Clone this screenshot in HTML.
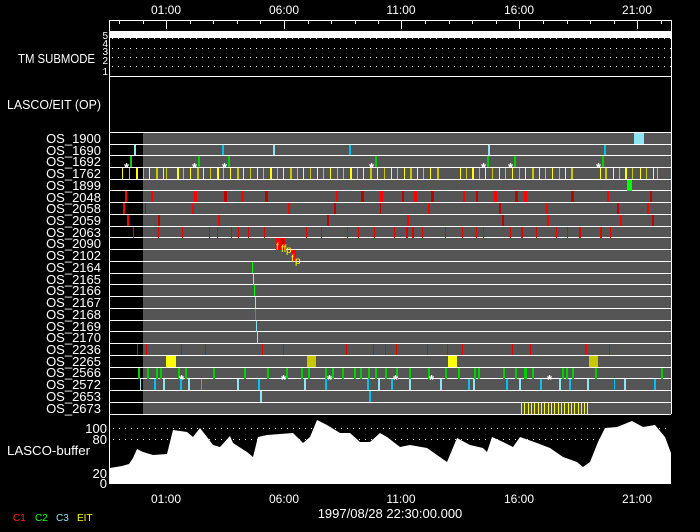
<!DOCTYPE html>
<html><head><meta charset="utf-8"><style>
html,body{margin:0;padding:0;background:#000;}
svg{display:block;}
text{font-family:"Liberation Sans",sans-serif;fill:#fff;}
</style></head><body>
<svg width="700" height="532" viewBox="0 0 700 532" xmlns="http://www.w3.org/2000/svg" shape-rendering="crispEdges">
<rect width="700" height="532" fill="#000"/>
<g stroke="#fff" stroke-width="1">
<line x1="109" y1="20.5" x2="671" y2="20.5"/>
<line x1="109.5" y1="20" x2="109.5" y2="484"/>
<line x1="671.5" y1="20" x2="671.5" y2="414"/>
<line x1="109" y1="76.5" x2="671" y2="76.5"/>
<line x1="109" y1="132.5" x2="671" y2="132.5"/>
</g>
<g stroke="#fff">
<path d="M119.5 20v4M143.5 20v4M190.5 20v4M213.5 20v4M237.5 20v4M260.5 20v4M308.5 20v4M331.5 20v4M355.5 20v4M378.5 20v4M425.5 20v4M449.5 20v4M472.5 20v4M496.5 20v4M543.5 20v4M567.5 20v4M590.5 20v4M614.5 20v4M661.5 20v4"/>
<path d="M166.5 20v9M284.5 20v9M401.5 20v9M519.5 20v9M637.5 20v9"/>
</g>
<g font-size="12" text-anchor="middle">
<text x="166" y="14">01:00</text><text x="284" y="14">06:00</text><text x="401" y="14">11:00</text><text x="519" y="14">16:00</text><text x="637" y="14">21:00</text>
</g>
<rect x="110" y="31" width="561" height="7" fill="#fff"/>
<g stroke="#fff" stroke-dasharray="1 5" stroke-width="1">
<line x1="112" y1="38.5" x2="671" y2="38.5"/><line x1="112" y1="48.5" x2="671" y2="48.5"/>
<line x1="112" y1="57.5" x2="671" y2="57.5"/><line x1="112" y1="66.5" x2="671" y2="66.5"/>
</g>
<g font-size="10" text-anchor="end">
<text x="108" y="39">5</text><text x="108" y="47">4</text><text x="108" y="55">3</text><text x="108" y="64">2</text><text x="108" y="75">1</text>
</g>
<text x="18" y="63" font-size="13" textLength="77" lengthAdjust="spacingAndGlyphs">TM SUBMODE</text>
<text x="7" y="109" font-size="13" textLength="94" lengthAdjust="spacingAndGlyphs">LASCO/EIT (OP)</text>
<rect x="143" y="133" width="528" height="281" fill="#555"/>
<g stroke="#fff"><path d="M109 144.5h562M109 155.5h562M109 167.5h562M109 179.5h562M109 190.5h562M109 202.5h562M109 214.5h562M109 226.5h562M109 237.5h562M109 249.5h562M109 261.5h562M109 273.5h562M109 284.5h562M109 296.5h562M109 308.5h562M109 320.5h562M109 331.5h562M109 343.5h562M109 355.5h562M109 367.5h562M109 378.5h562M109 390.5h562M109 402.5h562M109 414.5h562"/></g>
<g font-size="13" text-anchor="end">
<text x="101" y="143">OS_1900</text><text x="101" y="155">OS_1690</text><text x="101" y="166">OS_1692</text><text x="101" y="178">OS_1762</text>
<text x="101" y="190">OS_1899</text><text x="101" y="202">OS_2048</text><text x="101" y="213">OS_2058</text><text x="101" y="225">OS_2059</text>
<text x="101" y="237">OS_2063</text><text x="101" y="248">OS_2090</text><text x="101" y="260">OS_2102</text><text x="101" y="272">OS_2164</text>
<text x="101" y="284">OS_2165</text><text x="101" y="295">OS_2166</text><text x="101" y="307">OS_2167</text><text x="101" y="319">OS_2168</text>
<text x="101" y="331">OS_2169</text><text x="101" y="342">OS_2170</text><text x="101" y="354">OS_2236</text><text x="101" y="366">OS_2265</text>
<text x="101" y="377">OS_2566</text><text x="101" y="389">OS_2572</text><text x="101" y="401">OS_2653</text><text x="101" y="413">OS_2673</text>
</g>
<rect x="634" y="133" width="10" height="11" fill="#8ee4f0"/>
<g fill="#8ee4f0"><rect x="134" y="145" width="2" height="10"/><rect x="273" y="145" width="2" height="10"/><rect x="488" y="145" width="2" height="10"/></g>
<g fill="#00c0f0"><rect x="222" y="145" width="2" height="10"/><rect x="349" y="145" width="2" height="10"/><rect x="604" y="145" width="2" height="10"/></g>
<g fill="#00d000"><rect x="130" y="156" width="2" height="11"/><rect x="198" y="156" width="2" height="11"/><rect x="228" y="156" width="2" height="11"/><rect x="375" y="156" width="2" height="11"/><rect x="487" y="156" width="2" height="11"/><rect x="514" y="156" width="2" height="11"/><rect x="602" y="156" width="2" height="11"/></g>
<g font-size="13" font-weight="bold"><text x="124" y="172">*</text><text x="192" y="172">*</text><text x="222" y="172">*</text><text x="369" y="172">*</text><text x="481" y="172">*</text><text x="508" y="172">*</text><text x="596" y="172">*</text></g>
<g fill="#ffff00">
<rect x="122" y="168" width="1" height="11"/><rect x="136" y="168" width="2" height="11"/><rect x="149" y="168" width="1" height="11"/><rect x="163" y="168" width="1" height="11"/><rect x="177" y="168" width="2" height="11"/><rect x="190" y="168" width="1" height="11"/><rect x="203" y="168" width="1" height="11"/><rect x="217" y="168" width="2" height="11"/><rect x="230" y="168" width="1" height="11"/><rect x="243" y="168" width="1" height="11"/><rect x="257" y="168" width="1" height="11"/><rect x="270" y="168" width="2" height="11"/><rect x="283" y="168" width="1" height="11"/><rect x="303" y="168" width="1" height="11"/><rect x="317" y="168" width="1" height="11"/><rect x="330" y="168" width="1" height="11"/><rect x="350" y="168" width="2" height="11"/><rect x="363" y="168" width="1" height="11"/><rect x="377" y="168" width="1" height="11"/><rect x="391" y="168" width="1" height="11"/><rect x="404" y="168" width="1" height="11"/><rect x="417" y="168" width="1" height="11"/><rect x="430" y="168" width="1" height="11"/><rect x="460" y="168" width="1" height="11"/><rect x="472" y="168" width="2" height="11"/><rect x="485" y="168" width="1" height="11"/><rect x="499" y="168" width="1" height="11"/><rect x="512" y="168" width="1" height="11"/><rect x="525" y="168" width="1" height="11"/><rect x="539" y="168" width="1" height="11"/><rect x="552" y="168" width="1" height="11"/><rect x="565" y="168" width="1" height="11"/><rect x="600" y="168" width="1" height="11"/><rect x="613" y="168" width="1" height="11"/><rect x="625" y="168" width="2" height="11"/><rect x="640" y="168" width="1" height="11"/><rect x="653" y="168" width="1" height="11"/>
</g>
<g fill="#c8c800">
<rect x="129" y="168" width="1" height="11"/><rect x="143" y="168" width="1" height="11"/><rect x="156" y="168" width="2" height="11"/><rect x="166" y="168" width="1" height="11"/><rect x="183" y="168" width="1" height="11"/><rect x="197" y="168" width="2" height="11"/><rect x="210" y="168" width="1" height="11"/><rect x="223" y="168" width="1" height="11"/><rect x="237" y="168" width="2" height="11"/><rect x="250" y="168" width="1" height="11"/><rect x="263" y="168" width="1" height="11"/><rect x="277" y="168" width="1" height="11"/><rect x="290" y="168" width="2" height="11"/><rect x="297" y="168" width="1" height="11"/><rect x="310" y="168" width="1" height="11"/><rect x="323" y="168" width="1" height="11"/><rect x="337" y="168" width="1" height="11"/><rect x="343" y="168" width="1" height="11"/><rect x="357" y="168" width="1" height="11"/><rect x="370" y="168" width="2" height="11"/><rect x="384" y="168" width="1" height="11"/><rect x="397" y="168" width="1" height="11"/><rect x="410" y="168" width="2" height="11"/><rect x="423" y="168" width="1" height="11"/><rect x="437" y="168" width="2" height="11"/><rect x="466" y="168" width="1" height="11"/><rect x="479" y="168" width="1" height="11"/><rect x="492" y="168" width="1" height="11"/><rect x="505" y="168" width="1" height="11"/><rect x="519" y="168" width="1" height="11"/><rect x="532" y="168" width="2" height="11"/><rect x="545" y="168" width="1" height="11"/><rect x="559" y="168" width="1" height="11"/><rect x="571" y="168" width="2" height="11"/><rect x="605" y="168" width="2" height="11"/><rect x="619" y="168" width="1" height="11"/><rect x="632" y="168" width="1" height="11"/><rect x="646" y="168" width="1" height="11"/><rect x="657" y="168" width="1" height="11"/>
</g>
<rect x="627" y="180" width="5" height="11" fill="#00ff00"/>
<g fill="#ff0000"><rect x="125" y="191" width="2" height="11"/><rect x="151" y="191" width="2" height="11"/><rect x="194" y="191" width="3" height="11"/><rect x="241" y="191" width="3" height="11"/><rect x="336" y="191" width="2" height="11"/><rect x="380" y="191" width="3" height="11"/><rect x="414" y="191" width="3" height="11"/><rect x="463" y="191" width="2" height="11"/><rect x="494" y="191" width="3" height="11"/><rect x="524" y="191" width="3" height="11"/><rect x="607" y="191" width="2" height="11"/></g>
<g fill="#c00000"><rect x="224" y="191" width="3" height="11"/><rect x="265" y="191" width="3" height="11"/><rect x="361" y="191" width="3" height="11"/><rect x="402" y="191" width="2" height="11"/><rect x="431" y="191" width="3" height="11"/><rect x="476" y="191" width="2" height="11"/><rect x="515" y="191" width="3" height="11"/><rect x="571" y="191" width="3" height="11"/><rect x="650" y="191" width="2" height="11"/></g>
<g fill="#ff0000"><rect x="123" y="203" width="2" height="11"/><rect x="192" y="203" width="2" height="11"/><rect x="288" y="203" width="2" height="11"/><rect x="428" y="203" width="2" height="11"/><rect x="546" y="203" width="2" height="11"/><rect x="647" y="203" width="2" height="11"/></g>
<g fill="#c00000"><rect x="145" y="203" width="1" height="11"/><rect x="334" y="203" width="2" height="11"/><rect x="380" y="203" width="1" height="11"/><rect x="499" y="203" width="2" height="11"/><rect x="617" y="203" width="2" height="11"/></g>
<g fill="#ff0000"><rect x="127" y="215" width="2" height="11"/><rect x="218" y="215" width="2" height="11"/><rect x="407" y="215" width="2" height="11"/><rect x="547" y="215" width="2" height="11"/><rect x="620" y="215" width="2" height="11"/></g>
<g fill="#c00000"><rect x="158" y="215" width="2" height="11"/><rect x="327" y="215" width="2" height="11"/><rect x="502" y="215" width="2" height="11"/><rect x="652" y="215" width="2" height="11"/></g>
<g fill="#e00000"><rect x="133" y="227" width="1" height="11"/><rect x="158" y="227" width="1" height="11"/><rect x="182" y="227" width="1" height="11"/><rect x="209" y="227" width="1" height="11"/><rect x="217" y="227" width="1" height="11"/><rect x="231" y="227" width="1" height="11"/><rect x="238" y="227" width="1" height="11"/><rect x="248" y="227" width="1" height="11"/><rect x="264" y="227" width="1" height="11"/><rect x="306" y="227" width="1" height="11"/><rect x="321" y="227" width="1" height="11"/><rect x="347" y="227" width="1" height="11"/><rect x="358" y="227" width="1" height="11"/><rect x="374" y="227" width="1" height="11"/><rect x="394" y="227" width="1" height="11"/><rect x="406" y="227" width="2" height="11"/><rect x="412" y="227" width="2" height="11"/><rect x="422" y="227" width="1" height="11"/><rect x="445" y="227" width="1" height="11"/><rect x="462" y="227" width="1" height="11"/><rect x="476" y="227" width="1" height="11"/><rect x="483" y="227" width="1" height="11"/><rect x="510" y="227" width="1" height="11"/><rect x="521" y="227" width="2" height="11"/><rect x="536" y="227" width="1" height="11"/><rect x="556" y="227" width="1" height="11"/><rect x="567" y="227" width="1" height="11"/><rect x="579" y="227" width="2" height="11"/><rect x="600" y="227" width="2" height="11"/><rect x="610" y="227" width="1" height="11"/></g>
<rect x="276" y="238" width="6" height="12" fill="#ff0000"/><rect x="282" y="238" width="2" height="12" fill="#c00000"/><rect x="284" y="238" width="2" height="12" fill="#ff0000"/>
<rect x="291" y="250" width="5" height="11" fill="#ff0000"/>
<g font-size="10"><text x="276" y="250" style="fill:#ffff00">f</text><text x="281" y="252" style="fill:#ffff00">ff</text><text x="286" y="253" style="fill:#ffff00">p</text><text x="291" y="262" style="fill:#ffff00">f</text><text x="295" y="264" style="fill:#ffff00">p</text></g>
<rect x="252" y="262" width="1" height="11" fill="#00ff00"/><rect x="253" y="274" width="1" height="11" fill="#8ee4f0"/><rect x="254" y="285" width="1" height="11" fill="#00ff00"/><rect x="255" y="297" width="1" height="11" fill="#8ee4f0"/><rect x="255" y="309" width="1" height="11" fill="#00d000"/><rect x="256" y="321" width="1" height="11" fill="#8ee4f0"/><rect x="257" y="332" width="1" height="11" fill="#8ee4f0"/>
<g fill="#e00000"><rect x="137" y="344" width="1" height="11"/><rect x="146" y="344" width="1" height="11"/><rect x="181" y="344" width="1" height="11"/><rect x="205" y="344" width="1" height="11"/><rect x="262" y="344" width="1" height="11"/><rect x="283" y="344" width="1" height="11"/><rect x="346" y="344" width="1" height="11"/><rect x="373" y="344" width="1" height="11"/><rect x="385" y="344" width="1" height="11"/><rect x="396" y="344" width="1" height="11"/><rect x="427" y="344" width="1" height="11"/><rect x="447" y="344" width="1" height="11"/><rect x="462" y="344" width="1" height="11"/><rect x="512" y="344" width="1" height="11"/><rect x="530" y="344" width="1" height="11"/><rect x="585" y="344" width="2" height="11" fill="#ff0000"/><rect x="609" y="344" width="1" height="11"/></g>
<rect x="166" y="356" width="10" height="11" fill="#ffff00"/><rect x="307" y="356" width="9" height="11" fill="#c8c800"/><rect x="448" y="356" width="9" height="11" fill="#ffff00"/><rect x="589" y="356" width="9" height="11" fill="#c8c800"/>
<g fill="#00d000"><rect x="138" y="368" width="2" height="11"/><rect x="147" y="368" width="2" height="11"/><rect x="156" y="368" width="2" height="11"/><rect x="160" y="368" width="2" height="11"/><rect x="178" y="368" width="2" height="11"/><rect x="185" y="368" width="2" height="11"/><rect x="213" y="368" width="2" height="11"/><rect x="244" y="368" width="2" height="11"/><rect x="267" y="368" width="2" height="11"/><rect x="286" y="368" width="2" height="11"/><rect x="301" y="368" width="2" height="11"/><rect x="308" y="368" width="2" height="11"/><rect x="325" y="368" width="2" height="11"/><rect x="332" y="368" width="2" height="11"/><rect x="342" y="368" width="2" height="11"/><rect x="354" y="368" width="2" height="11"/><rect x="360" y="368" width="2" height="11"/><rect x="368" y="368" width="2" height="11"/><rect x="375" y="368" width="2" height="11"/><rect x="385" y="368" width="2" height="11"/><rect x="396" y="368" width="2" height="11"/><rect x="409" y="368" width="2" height="11"/><rect x="428" y="368" width="2" height="11"/><rect x="445" y="368" width="2" height="11"/><rect x="458" y="368" width="2" height="11"/><rect x="474" y="368" width="2" height="11"/><rect x="478" y="368" width="2" height="11"/><rect x="503" y="368" width="2" height="11"/><rect x="515" y="368" width="2" height="11"/><rect x="524" y="368" width="3" height="11"/><rect x="532" y="368" width="2" height="11"/><rect x="562" y="368" width="2" height="11"/><rect x="566" y="368" width="2" height="11"/><rect x="572" y="368" width="2" height="11"/><rect x="595" y="368" width="2" height="11"/><rect x="661" y="368" width="2" height="11"/></g>
<g font-size="13" font-weight="bold"><text x="179" y="384">*</text><text x="281" y="384">*</text><text x="327" y="384">*</text><text x="393" y="384">*</text><text x="429" y="384">*</text><text x="547" y="384">*</text></g>
<g fill="#8ee4f0"><rect x="140" y="379" width="1" height="11"/><rect x="163" y="379" width="2" height="11"/><rect x="188" y="379" width="2" height="11"/><rect x="237" y="379" width="2" height="11"/><rect x="304" y="379" width="2" height="11"/><rect x="378" y="379" width="2" height="11"/><rect x="409" y="379" width="2" height="11"/><rect x="440" y="379" width="2" height="11"/><rect x="473" y="379" width="2" height="11"/><rect x="519" y="379" width="2" height="11"/><rect x="559" y="379" width="2" height="11"/><rect x="587" y="379" width="2" height="11"/><rect x="624" y="379" width="2" height="11"/></g>
<g fill="#00c0f0"><rect x="154" y="379" width="2" height="11"/><rect x="180" y="379" width="2" height="11"/><rect x="201" y="379" width="1" height="11"/><rect x="258" y="379" width="2" height="11"/><rect x="325" y="379" width="2" height="11"/><rect x="367" y="379" width="2" height="11"/><rect x="391" y="379" width="2" height="11"/><rect x="468" y="379" width="2" height="11"/><rect x="506" y="379" width="2" height="11"/><rect x="540" y="379" width="2" height="11"/><rect x="569" y="379" width="2" height="11"/><rect x="614" y="379" width="1" height="11"/><rect x="654" y="379" width="2" height="11"/></g>
<rect x="260" y="391" width="2" height="11" fill="#8ee4f0"/><rect x="369" y="391" width="2" height="11" fill="#00c0f0"/>
<g stroke="#ffff00" stroke-width="1"><path d="M521.5 403v11M524.5 403v11M528.5 403v11M531.5 403v11M534.5 403v11M538.5 403v11M541.5 403v11M544.5 403v11M548.5 403v11M551.5 403v11M554.5 403v11M558.5 403v11M561.5 403v11M564.5 403v11M568.5 403v11M571.5 403v11M574.5 403v11M578.5 403v11M581.5 403v11M584.5 403v11M587.5 403v11"/></g>
<g stroke="#fff" stroke-dasharray="1 5"><line x1="113" y1="428.5" x2="671" y2="428.5"/><line x1="113" y1="439.5" x2="671" y2="439.5"/></g>
<polygon fill="#fff" shape-rendering="auto" points="110,468 122,466 129,464 133,458 137,449 143,452 153,455 167,454 173,430 187,432 193,437 200,428 207,437 213,445 220,447 230,436 233,443 247,452 253,457 258,437 267,435 293,433 303,443 310,437 317,420 327,425 340,433 350,433 360,442 370,442 380,433 387,437 400,447 410,445 427,448 437,455 447,462 457,438 470,445 483,448 487,452 492,437 503,442 513,447 520,437 537,443 550,448 563,457 577,462 583,467 590,462 598,442 605,428 617,427 632,421 643,427 655,425 665,437 671,453 671,484 110,484"/>
<g font-size="13" text-anchor="end"><text x="107" y="433">100</text><text x="107" y="444">80</text><text x="107" y="478">20</text><text x="107" y="488">0</text></g>
<text x="7" y="455" font-size="13" textLength="83" lengthAdjust="spacingAndGlyphs">LASCO-buffer</text>
<g font-size="12" text-anchor="middle">
<text x="166" y="503">01:00</text><text x="284" y="503">06:00</text><text x="401" y="503">11:00</text><text x="519" y="503">16:00</text><text x="637" y="503">21:00</text>
</g>
<text x="390" y="518" font-size="13" text-anchor="middle">1997/08/28 22:30:00.000</text>
<g font-size="10"><text x="13" y="521" style="fill:#ff2020">C1</text><text x="35" y="521" style="fill:#20ff20">C2</text><text x="56" y="521" style="fill:#8ee4f0">C3</text><text x="77" y="521" style="fill:#ffff00">EIT</text></g>
</svg>
</body></html>
